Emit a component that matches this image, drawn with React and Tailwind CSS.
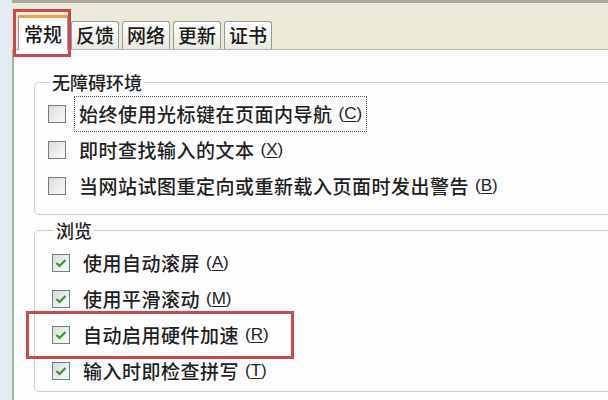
import React from 'react';

const font = { fontFamily: '"Noto Sans CJK SC", "Noto Sans", sans-serif' };

const tabs = ['常规', '反馈', '网络', '更新', '证书'];

const Check = ({ checked }) => (
  <span className="w-[18px] h-[18px] shrink-0 border border-[#6f7f8c] bg-gradient-to-br from-[#dcdcd6] to-[#fbfbf8] flex items-center justify-center">
    {checked && (
      <svg width="12" height="10" viewBox="0 0 12 10">
        <path d="M1.5 5 L4.5 8 L10.5 2" fill="none" stroke="#2f9a3a" strokeWidth="2.2" />
      </svg>
    )}
  </span>
);

const Key = ({ k }) => (
  <span className="ml-[6px] text-[17px] text-[#222]" style={{ fontFamily: '"Liberation Sans", sans-serif' }}>
    (<span className="underline underline-offset-2">{k}</span>)
  </span>
);

const Row = ({ checked, label, k, focus, mark }) => (
  <div className="relative flex items-center h-[36px]">
    {mark && (
      <div className="absolute -left-[26px] w-[268px] top-[-6px] bottom-[-6px] border-[3px] border-[#c74a4f]" />
    )}
    <Check checked={checked} />
    <div className={`ml-[8px] flex items-center px-[4px] py-[3px] border border-dotted ${focus ? 'border-[#555]' : 'border-transparent'}`}>
      <span className="text-[19px] font-medium tracking-[0.5px] text-[#1f1f1f]">{label}</span>
      <Key k={k} />
    </div>
  </div>
);

const Group = ({ title, children, className }) => (
  <fieldset className={`border border-[#cfcfc4] rounded-[5px] w-[720px] ${className}`}>
    <legend className="ml-[2px] px-[2px] text-[18px] font-medium text-[#1f1f1f] leading-[20px]">{title}</legend>
    {children}
  </fieldset>
);

export default function App() {
  return (
    <div className="w-[608px] h-[400px] overflow-hidden bg-[#ece9d8] flex" style={font}>
      <div className="w-[12px] shrink-0 bg-[#e3ecf0]" />
      <div className="flex-1 flex flex-col border-t-[3px] border-[#a9a99c]">
        <div className="h-[47px] flex items-end pl-[6px] gap-[3px] shrink-0 border-b border-[#b9b9ac] relative">
          {tabs.map((t, i) =>
            i === 0 ? (
              <div key={t} className="relative h-[35px] px-[5px] flex items-center bg-[#fcfcfe] border border-b-0 border-[#919b9c] border-t-[3px] border-t-[#e6a54a] -mb-px">
                <div className="absolute -left-[6px] -right-[4px] -top-[9px] bottom-[-7px] border-[3px] border-[#c74a4f]" />
                <span className="text-[19px] font-medium text-[#1a1a1a]">{t}</span>
              </div>
            ) : (
              <div key={t} className="h-[28px] px-[4px] flex items-center bg-gradient-to-b from-[#ffffff] to-[#e8e8e0] border border-b-0 border-[#919b9c] rounded-t-[3px]">
                <span className="text-[19px] font-medium text-[#1a1a1a]">{t}</span>
              </div>
            )
          )}
        </div>
        <div className="flex-1 bg-[#fdfdfd] border-l-2 border-[#a8aea9] pl-[20px] pt-[22px] overflow-hidden">
          <Group title="无障碍环境" className="pl-[13px] pt-[4px] pb-[10px]">
            <Row label="始终使用光标键在页面内导航" k="C" focus />
            <Row label="即时查找输入的文本" k="X" />
            <Row label="当网站试图重定向或重新载入页面时发出警告" k="B" />
          </Group>
          <Group title="浏览" className="mt-[5px] pl-[17px] pt-[5px] pb-[2px]">
            <Row checked label="使用自动滚屏" k="A" />
            <Row checked label="使用平滑滚动" k="M" />
            <Row checked label="自动启用硬件加速" k="R" mark />
            <Row checked label="输入时即检查拼写" k="T" />
          </Group>
        </div>
      </div>
    </div>
  );
}
